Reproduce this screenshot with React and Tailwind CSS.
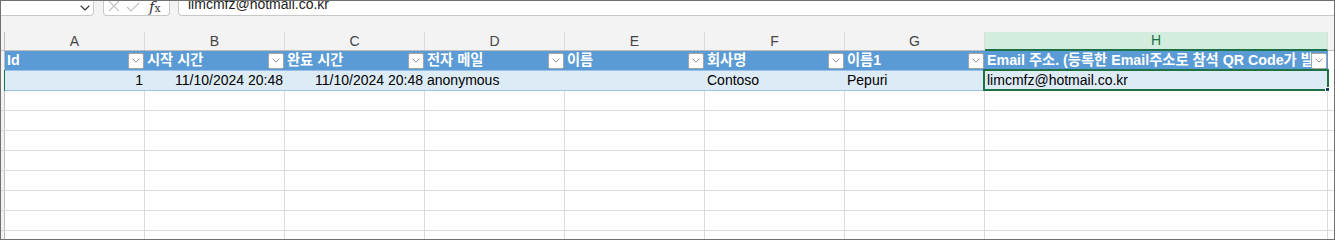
import React from 'react';

const cols = [
  { letter: 'A', w: 'w-[140px]', head: 'Id', val: '1', right: true },
  { letter: 'B', w: 'w-[140px]', head: '시작 시간', val: '11/10/2024 20:48', right: true },
  { letter: 'C', w: 'w-[140px]', head: '완료 시간', val: '11/10/2024 20:48', right: true },
  { letter: 'D', w: 'w-[140px]', head: '전자 메일', val: 'anonymous' },
  { letter: 'E', w: 'w-[140px]', head: '이름', val: '' },
  { letter: 'F', w: 'w-[140px]', head: '회사명', val: 'Contoso' },
  { letter: 'G', w: 'w-[140px]', head: '이름1', val: 'Pepuri' },
  {
    letter: 'H',
    w: 'w-[343px]',
    head: 'Email 주소. (등록한 Email주소로 참석 QR Code가 발송됩니다)',
    val: 'limcmfz@hotmail.co.kr',
    selected: true,
  },
];

const Chevron = ({ className }) => (
  <svg viewBox="0 0 10 6" className={className} fill="none">
    <path d="M1 1l4 4 4-4" stroke="currentColor" strokeWidth="1.1" strokeLinecap="round" strokeLinejoin="round" />
  </svg>
);

const FilterButton = () => (
  <div className="shrink-0 mr-[1px] w-[16px] h-[16px] bg-white border border-[#a6a6a6] rounded-[2px] flex items-center justify-center text-[#7a7a7a]">
    <Chevron className="w-[8px] h-[5px]" />
  </div>
);

const FormulaBar = () => (
  <div className="h-[15px] flex shrink-0">
    <div className="w-[93px] h-full bg-white border-r border-b border-[#c8c8c8] rounded-br-[4px] flex justify-end pr-[3px] text-[#333]">
      <Chevron className="w-[10px] h-[6px] mt-[4px]" />
    </div>
    <div className="w-[9px]" />
    <div className="w-[67px] h-full bg-white border-x border-b border-[#c8c8c8] rounded-b-[4px] flex items-start pl-[4px] overflow-hidden">
      <svg viewBox="0 0 12 12" className="w-[12px] h-[12px] -mt-[1px] text-[#c2c2c2]" fill="none">
        <path d="M1 1l10 10M11 1L1 11" stroke="currentColor" strokeWidth="1.1" />
      </svg>
      <svg viewBox="0 0 14 10" className="w-[14px] h-[10px] ml-[6px] mt-[1px] text-[#c2c2c2]" fill="none">
        <path d="M1 5l4 4 8-8" stroke="currentColor" strokeWidth="1.1" />
      </svg>
      <div className="ml-[9px] -mt-[2px] text-[#333] font-['DejaVu_Serif',serif] leading-none whitespace-nowrap">
        <span className="italic text-[15px]">f</span>
        <span className="text-[11px]">x</span>
      </div>
    </div>
    <div className="w-[8px]" />
    <div className="flex-1 h-full bg-white border-l border-b border-[#c8c8c8] rounded-bl-[4px] pl-[9px] overflow-hidden">
      <div className="-mt-[6px] text-[14px] leading-[18px] text-[#222]">limcmfz@hotmail.co.kr</div>
    </div>
  </div>
);

const ColumnHeaders = () => (
  <div className="h-[19px] flex shrink-0 border-b border-[#bdbdbd]">
    <div className="w-[4px] border-r border-[#bdbdbd]" />
    {cols.map((c) =>
      c.selected ? (
        <div
          key={c.letter}
          className={`${c.w} -mb-[1px] bg-[#d2eddd] border-r border-[#dcdcdc] border-b-2 border-b-[#1e7145] flex items-center justify-center text-[14px] text-[#1e7145]`}
        >
          {c.letter}
        </div>
      ) : (
        <div
          key={c.letter}
          className={`${c.w} border-r border-[#dcdcdc] flex items-center justify-center text-[14px] text-[#444]`}
        >
          {c.letter}
        </div>
      )
    )}
    <div className="flex-1" />
  </div>
);

const TableHeader = () => (
  <div className="h-[19px] flex shrink-0 bg-white">
    <div className="w-[4px] bg-[#f3f3f3] border-r border-[#bdbdbd]" />
    {cols.map((c) => (
      <div key={c.letter} className={`${c.w} bg-[#5b9bd5] flex items-center pl-[2px] overflow-hidden`}>
        <div className="flex-1 min-w-0 overflow-hidden whitespace-nowrap text-white font-bold text-[14.25px] leading-[19px]">
          {c.head}
        </div>
        <FilterButton />
      </div>
    ))}
    <div className="flex-1" />
  </div>
);

const DataRow = () => (
  <div className="h-[21px] flex shrink-0 bg-white">
    <div className="w-[4px] bg-[#f3f3f3] border-r border-[#1e7145]" />
    {cols.map((c) => (
      <div
        key={c.letter}
        className={`${c.w} relative bg-[#ddebf7] border-y border-[#9bc2e6] flex items-center text-[14px] text-black whitespace-nowrap ${
          c.right ? 'justify-end pr-[2px]' : 'pl-[2px]'
        }`}
      >
        {c.val}
        {c.selected && (
          <div className="absolute -left-[2px] -top-[2px] -right-[1px] -bottom-[1px] border-2 border-[#1e7145]">
            <div className="absolute -right-[3px] -bottom-[3px] w-[5px] h-[5px] bg-[#1f3d5c] border border-white" />
          </div>
        )}
      </div>
    ))}
    <div className="flex-1" />
  </div>
);

const EmptyRow = () => (
  <div className="h-[20px] flex shrink-0 bg-white border-b border-[#dcdcdc]">
    <div className="w-[4px] bg-[#f3f3f3] border-r border-[#bdbdbd]" />
    {cols.map((c) => (
      <div key={c.letter} className={`${c.w} border-r border-[#dcdcdc]`} />
    ))}
    <div className="flex-1" />
  </div>
);

export default function App() {
  return (
    <div className="w-[1335px] h-[240px] overflow-hidden bg-[#f3f3f3] border border-[#707070] flex flex-col font-['Liberation_Sans','Noto_Sans_CJK_KR',sans-serif]">
      <FormulaBar />
      <div className="h-[16px] shrink-0" />
      <ColumnHeaders />
      <TableHeader />
      <DataRow />
      {Array.from({ length: 8 }).map((_, i) => (
        <EmptyRow key={i} />
      ))}
    </div>
  );
}
